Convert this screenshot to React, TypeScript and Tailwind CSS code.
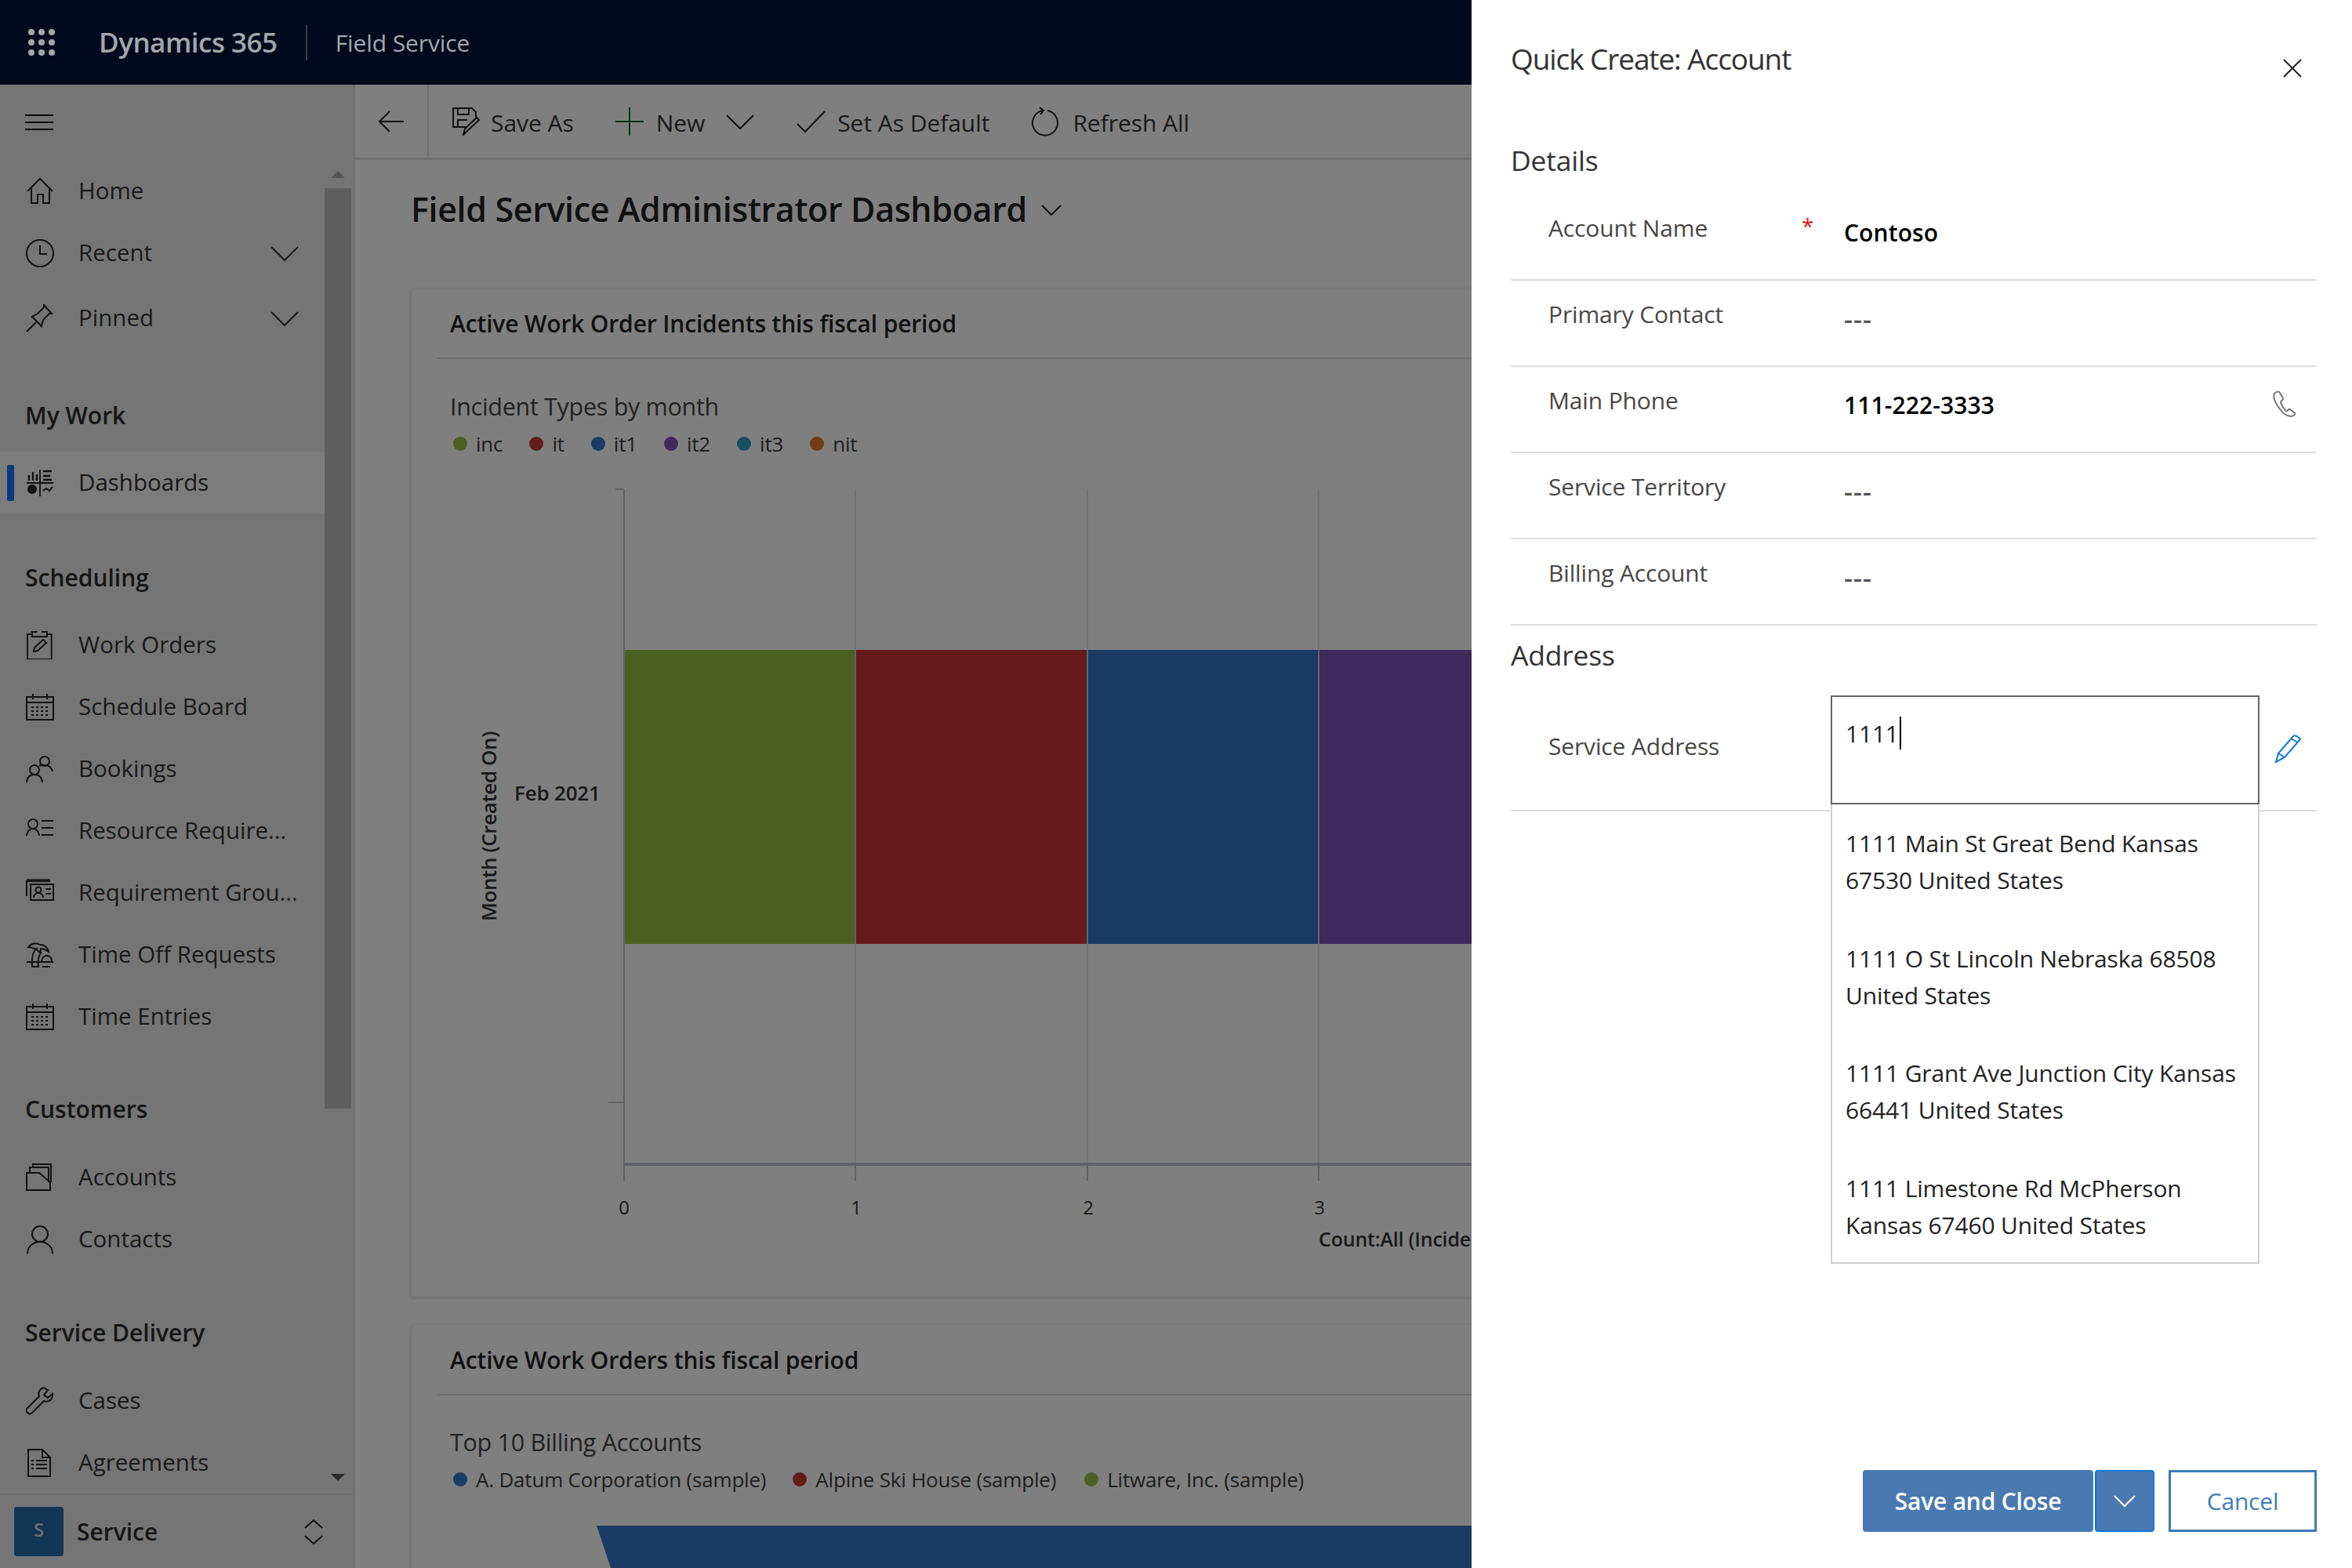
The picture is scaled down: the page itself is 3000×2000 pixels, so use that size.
import React from 'react';

const Svg = ({ children, w = 36, h = 36, className = '' }: { children: React.ReactNode; w?: number; h?: number; className?: string }) => (
  <svg width={w} height={h} viewBox={`0 0 ${w} ${h}`} fill="none" stroke="currentColor" strokeWidth={2} className={`shrink-0 ${className}`}>
    {children}
  </svg>
);

const icons: Record<string, React.ReactNode> = {
  home: <path d="M2 18 18 2l16 16M7 14v19h8V22h7v11h8V14" />,
  clock: (
    <>
      <circle cx="18" cy="18" r="17" />
      <path d="M18 8v11h9" />
    </>
  ),
  pin: <path d="M1 35 13 23M8 16l12 12 2-8 8-8 3 0L23 1l0 3-8 8-7 4ZM8 16l-1 1M20 28l-1 1" />,
  dash: (
    <>
      <path d="M18 1v34M1 18h34" strokeWidth={1.8} />
      <path d="M4 15V8M9 15V4M14 15V7M22 3h11M22 9h9M22 14h11" strokeWidth={2.4} />
      <circle cx="8" cy="26" r="5" fill="currentColor" />
      <path d="M22 28l4-3 4 3 4-5" />
    </>
  ),
  clipboard: (
    <>
      <path d="M7 6H1v32h32V6h-6M7 3h6a4 4 0 0 1 8 0h6v6H7Z" transform="translate(1 -2) scale(0.96 1)" />
      <path d="M10 26l1-5 11-10 4 4-11 10Z" />
    </>
  ),
  calendar: (
    <>
      <rect x="1" y="5" width="34" height="29" />
      <path d="M1 12h34M9 1v7M27 1v7" />
      <path d="M7 18h22M7 23h22M7 28h22" strokeDasharray="3 3" strokeWidth={2.2} />
    </>
  ),
  bookings: (
    <>
      <circle cx="24" cy="8" r="6" />
      <circle cx="11" cy="19" r="6" />
      <path d="M1 35c0-6 4-10 10-10s10 4 10 10M17 14c1-1 4-1 7-1 5 0 9 3 10 8" />
    </>
  ),
  resource: (
    <>
      <circle cx="9" cy="9" r="6" />
      <path d="M1 24c0-5 4-9 8-9s8 4 8 9M20 5h15M20 14h15M20 23h15" />
    </>
  ),
  group: (
    <>
      <path d="M1 22V3h30" />
      <path d="M1 1h30" strokeWidth={1.5} />
      <rect x="6" y="7" width="29" height="20" />
      <circle cx="16" cy="14" r="3.5" />
      <path d="M10 24c0-4 3-6 6-6s6 2 6 6M25 13h7M25 19h7" />
    </>
  ),
  palm: (
    <>
      <path d="M3 8c4-5 10-6 15-3 5 0 10 3 11 9-4-3-7-4-11-4 1 0 1 3 0 5-3-3-6-6-15-7Z" />
      <path d="M15 9c-5 3-8 10-7 24h8c-1-6 0-14 4-19" />
      <path d="M1 27h34M20 27c0-5 3-8 7-8s6 3 6 8M21 33h10" />
    </>
  ),
  accounts: <path d="M1 12v22h30V24L17 12Zm4 0V5h24v19M9 6V1h23v23" />,
  contact: (
    <>
      <circle cx="18" cy="11" r="10" />
      <path d="M2 36c0-9 7-15 16-15s16 6 16 15" />
    </>
  ),
  wrench: <path d="M23 1c-5 1-8 6-6 11L2 27c-2 2-2 4 0 6s4 2 6 0l15-15c5 2 10-1 11-6l0-3-6 5-5-4 5-6Z" />,
  doc: (
    <>
      <path d="M3 1h18l10 10v24H3ZM21 1v10h10" />
      <path d="M7 15h3M13 15h14M7 20h3M13 20h14M7 25h3M13 25h14" />
    </>
  ),
};

const NavItem = ({ icon, label, chevron, active }: { icon: string; label: string; chevron?: boolean; active?: boolean }) => (
  <div className={`flex h-[79px] items-center text-[29.5px] text-[#333] ${active ? 'bg-[#f8f8f8] pl-[9px]' : 'pl-[33px]'}`}>
    {active && <div className="mr-[15px] h-[46px] w-[9px] rounded-[2px] bg-[#1475ff]" />}
    <span className="w-[67px] text-[#222]">
      <Svg>{icons[icon]}</Svg>
    </span>
    <span className="flex-1 whitespace-nowrap">{label}</span>
    {chevron && (
      <span className="mr-[33px]">
        <Svg><path d="M1 10l17 17 17-17" /></Svg>
      </span>
    )}
  </div>
);

const Heading = ({ children, mt }: { children: string; mt: string }) => (
  <div className={`flex h-[56px] items-center pl-[32px] text-[30px] font-semibold text-[#2c2c2c] ${mt}`}>{children}</div>
);

const Sidebar = () => (
  <aside className="flex h-[1892px] w-[453px] shrink-0 flex-col border-r-2 border-[#dcdcdc] bg-[#ebebeb]">
    <div className="flex h-[96px] shrink-0 items-center pl-[32px] text-[#111]">
      <Svg w={36} h={22}><path d="M0 2h36M0 11h36M0 20h36" /></Svg>
    </div>
    <div className="flex min-h-0 flex-1">
      <nav className="w-[414px] overflow-hidden">
        <NavItem icon="home" label="Home" />
        <NavItem icon="clock" label="Recent" chevron />
        <div className="mt-[4px]">
          <NavItem icon="pin" label="Pinned" chevron />
        </div>
        <Heading mt="mt-[56px]">My Work</Heading>
        <div className="mt-[19px]">
          <NavItem icon="dash" label="Dashboards" active />
        </div>
        <Heading mt="mt-[53px]">Scheduling</Heading>
        <div className="mt-[19px]">
          <NavItem icon="clipboard" label="Work Orders" />
          <NavItem icon="calendar" label="Schedule Board" />
          <NavItem icon="bookings" label="Bookings" />
          <NavItem icon="resource" label="Resource Require..." />
          <NavItem icon="group" label="Requirement Grou..." />
          <NavItem icon="palm" label="Time Off Requests" />
          <NavItem icon="calendar" label="Time Entries" />
        </div>
        <Heading mt="mt-[50px]">Customers</Heading>
        <div className="mt-[20px]">
          <NavItem icon="accounts" label="Accounts" />
          <NavItem icon="contact" label="Contacts" />
        </div>
        <Heading mt="mt-[51px]">Service Delivery</Heading>
        <div className="mt-[20px]">
          <NavItem icon="wrench" label="Cases" />
          <NavItem icon="doc" label="Agreements" />
        </div>
      </nav>
      {/* scrollbar */}
      <div className="flex w-[34px] flex-col items-center">
        <div className="mb-[13px] mt-[14px] h-0 w-0 border-x-[9px] border-b-[9px] border-x-transparent border-b-[#a8a8a8]" />
        <div className="h-[1174px] w-full bg-[#bebebe]" />
        <div className="mt-auto mb-[16px] h-0 w-0 border-x-[9px] border-t-[9px] border-x-transparent border-t-[#555]" />
      </div>
    </div>
    <div className="flex h-[95px] shrink-0 items-center border-t-2 border-[#dcdcdc] pl-[18px]">
      <div className="flex h-[63px] w-[63px] items-center justify-center rounded-[4px] bg-[#276ca8] pb-[6px] text-[24px] font-semibold text-[#ddd]">S</div>
      <span className="ml-[17px] flex-1 text-[30px] font-semibold text-[#2c2c2c]">Service</span>
      <span className="mr-[39px] text-[#222]">
        <Svg w={24} h={34}><path d="M1 12 12 2l11 10M1 22l11 10 11-10" /></Svg>
      </span>
    </div>
  </aside>
);

const ToolButton = ({ icon, label, ml, gap }: { icon: React.ReactNode; label: string; ml: string; gap: string }) => (
  <div className={`flex items-center ${ml}`}>
    {icon}
    <span className={`mt-[3px] whitespace-nowrap text-[30px] tracking-[-0.05px] text-[#333] ${gap}`}>{label}</span>
  </div>
);

const Toolbar = () => (
  <div className="flex h-[96px] shrink-0 items-center border-b-[3px] border-[#dcdcdc]">
    <div className="flex h-full w-[94px] items-center justify-center border-r-2 border-[#dcdcdc] text-[#222]">
      <Svg w={32} h={28}><path d="M32 14H1M14 1 1 14l13 13" /></Svg>
    </div>
    <ToolButton
      ml="ml-[29px]"
      gap="ml-[14px]"
      label="Save As"
      icon={
        <Svg w={36} h={36} className="text-[#222]">
          <path d="M18 25H2V1h24l5 5v6M8 1v8h14V1M8 25v-9h12" />
          <path d="M15 35l2-8 15-14 3 3-15 14Z" />
        </Svg>
      }
    />
    <ToolButton
      ml="ml-[53px]"
      gap="ml-[16px]"
      label="New"
      icon={
        <Svg w={36} h={36} className="text-[#0f6a2c]">
          <path d="M18 0v36M0 18h36" />
        </Svg>
      }
    />
    <span className="ml-[27px] text-[#222]">
      <Svg w={36} h={20}><path d="M1 2l17 17L35 2" /></Svg>
    </span>
    <ToolButton
      ml="ml-[54px]"
      gap="ml-[15px]"
      label="Set As Default"
      icon={
        <Svg w={37} h={30} className="text-[#222]">
          <path d="M1 18l10 10L36 2" />
        </Svg>
      }
    />
    <ToolButton
      ml="ml-[53px]"
      gap="ml-[16px]"
      label="Refresh All"
      icon={
        <Svg w={37} h={38} className="text-[#222]">
          <path d="M21 5a16 16 0 1 1-6 0M11 1l5 4-4 5" />
        </Svg>
      }
    />
  </div>
);

const LegendItem = ({ color, label, ml }: { color: string; label: string; ml: string }) => (
  <div className={`flex items-center ${ml}`}>
    <span className={`h-[18px] w-[18px] rounded-full ${color}`} />
    <span className="ml-[11px] whitespace-nowrap text-[26px] tracking-[-0.2px] text-[#3c3c3c]">{label}</span>
  </div>
);

const Chart = () => (
  <svg viewBox="525 595 1360 1000" width={1360} height={1000} className="mt-[12px] block">
    <g stroke="#e8e8e8" strokeWidth={2}>
      <path d="M1091 623v861M1387 623v861M1682 623v861" />
    </g>
    <rect x="796" y="828" width="295" height="375" fill="#9dbe44" />
    <rect x="1091" y="828" width="296" height="375" fill="#ca3636" />
    <rect x="1387" y="828" width="295" height="375" fill="#3476c8" />
    <rect x="1682" y="828" width="300" height="375" fill="#7c54b8" />
    <g stroke="#c9c9c9" strokeWidth={2}>
      <path d="M1091 828v375M1387 828v375M1682 828v375" />
    </g>
    <g stroke="#c0c4cc" strokeWidth={2} fill="none">
      <path d="M796 623v882M776 1405h20M785 623h11" />
      <path d="M796 1484h1100" strokeWidth={4} />
      <path d="M1091 1484v21M1387 1484v21M1682 1484v21" />
    </g>
    <g fontFamily="'Open Sans', sans-serif" fontSize="24" fill="#333" textAnchor="middle" letterSpacing="-0.2">
      <text x="796" y="1548">0</text>
      <text x="1092" y="1548">1</text>
      <text x="1388" y="1548">2</text>
      <text x="1683" y="1548">3</text>
    </g>
    <text x="656" y="1020" fontFamily="'Open Sans', sans-serif" fontSize="26" fontWeight="600" letterSpacing="-0.2" fill="#333">Feb 2021</text>
    <text x="0" y="0" transform="translate(633 1053) rotate(-90)" textAnchor="middle" fontFamily="'Open Sans', sans-serif" fontSize="26" fontWeight="600" letterSpacing="-0.4" fill="#333">Month (Created On)</text>
    <text x="1682" y="1589" fontFamily="'Open Sans', sans-serif" fontSize="25" fontWeight="600" letterSpacing="-0.2" fill="#333">Count:All (Incident Type)</text>
  </svg>
);

const Card = ({ title, className, children }: { title: string; className: string; children: React.ReactNode }) => (
  <section className={`w-[2380px] overflow-hidden rounded-t-[6px] border border-[#f2f2f2] bg-white shadow-[0_2px_4px_rgba(0,0,0,0.15)] ${className}`}>
    <div className="mx-[32px] flex h-[90px] items-center border-b-2 border-[#e0e0e0] pl-[17px] text-[30px] font-semibold tracking-[-0.15px] text-[#222]">{title}</div>
    <div className="pl-[49px]">{children}</div>
  </section>
);

const Main = () => (
  <main className="flex min-w-0 flex-1 flex-col bg-[#fefefe]">
    <Toolbar />
    <div className="flex flex-1 flex-col overflow-hidden pl-[71px]">
      <div className="flex h-[163px] shrink-0 items-start pt-[32px]">
        <h1 className="whitespace-nowrap text-[43px] font-semibold leading-[62px] tracking-[-0.35px] text-[#222]">Field Service Administrator Dashboard</h1>
        <span className="ml-[18px] mt-[24px] text-[#222]">
          <Svg w={26} h={16}><path d="M1 2l12 12L25 2" /></Svg>
        </span>
      </div>
      <Card title="Active Work Order Incidents this fiscal period" className="h-[1287px] shrink-0">
        <div className="mt-[42px] text-[30.5px] leading-[36px] tracking-[-0.3px] text-[#444]">Incident Types by month</div>
        <div className="mt-[12px] flex h-[36px] items-center pl-[4px]">
          <LegendItem color="bg-[#9dbe44]" label="inc" ml="" />
          <LegendItem color="bg-[#ca3636]" label="it" ml="ml-[34px]" />
          <LegendItem color="bg-[#3476c8]" label="it1" ml="ml-[34px]" />
          <LegendItem color="bg-[#7c54b8]" label="it2" ml="ml-[34px]" />
          <LegendItem color="bg-[#2f9fb8]" label="it3" ml="ml-[34px]" />
          <LegendItem color="bg-[#e0792a]" label="nit" ml="ml-[34px]" />
        </div>
        <div className="-ml-[49px]">
          <Chart />
        </div>
      </Card>
      <Card title="Active Work Orders this fiscal period" className="mt-[35px] shrink-0">
        <div className="mt-[41px] text-[30.5px] leading-[36px] tracking-[-0.3px] text-[#444]">Top 10 Billing Accounts</div>
        <div className="mt-[12px] flex h-[36px] items-center pl-[4px]">
          <LegendItem color="bg-[#3476c8]" label="A. Datum Corporation (sample)" ml="" />
          <LegendItem color="bg-[#ca3636]" label="Alpine Ski House (sample)" ml="ml-[34px]" />
          <LegendItem color="bg-[#9dbe44]" label="Litware, Inc. (sample)" ml="ml-[36px]" />
        </div>
        <svg width="1400" height="60" viewBox="0 0 1400 60" className="ml-[187px] mt-[41px] block">
          <path d="M0 0H1400V60H20Z" fill="#3476c8" />
        </svg>
      </Card>
    </div>
  </main>
);

const Row = ({ label, value, muted, star, icon }: { label: string; value: string; muted?: boolean; star?: boolean; icon?: React.ReactNode }) => (
  <div className="flex h-[110px] items-start border-b-2 border-[#dcdcdc] pl-[48px]">
    <span className="mt-[23px] w-[330px] whitespace-nowrap text-[30px] leading-[40px] tracking-[-0.15px] text-[#484644]">{label}</span>
    <span className="relative -ml-[1px] w-[48px]">
      {star && <span className="absolute left-[-6px] top-[19px] text-[28px] text-[#e81123]">*</span>}
    </span>
    <span className={`mt-[29px] flex-1 font-semibold leading-[40px] ${muted ? 'text-[34px] tracking-[1px] text-[#555]' : 'text-[30px] tracking-[0.1px] text-black'}`}>{value}</span>
    {icon}
  </div>
);

const AddressOption = ({ lines }: { lines: string[] }) => (
  <div className="h-[146.5px] pl-[17px] text-[30px] leading-[47px] tracking-[-0.15px] text-[#222]">
    {lines.map((line) => (
      <div key={line} className="whitespace-nowrap">{line}</div>
    ))}
  </div>
);

const QuickCreate = () => (
  <aside className="absolute right-0 top-0 z-20 flex h-[2000px] w-[1123px] flex-col bg-white pl-[50px] pr-[45px]">
    <div className="flex h-[150px] shrink-0 items-start justify-between">
      <h2 className="mt-[50px] text-[37px] leading-[50px] tracking-[-1.1px] text-[#333]">Quick Create: Account</h2>
      <span className="mr-[19px] mt-[75px] text-[#222]">
        <Svg w={24} h={24}><path d="M1 1l22 22M23 1 1 23" /></Svg>
      </span>
    </div>
    <div className="mt-[32px] h-[44px] text-[35.5px] leading-[44px] tracking-[-0.2px] text-[#333]">Details</div>
    <div className="mt-[23px] flex-none">
      <div className="-mt-[1px]">
        <Row label="Account Name" value="Contoso" star />
      </div>
      <Row label="Primary Contact" value="---" muted />
      <Row
        label="Main Phone"
        value="111-222-3333"
        icon={
          <span className="mr-[25px] mt-[30px] text-[#777]">
            <Svg w={32} h={34}>
              <path d="M3 4c3-3 6-3 7-1l4 7c1 2-3 3-3 5 1 4 4 8 7 11 2 1 3-3 5-2l6 5c1 2-2 4-5 4-6 0-12-6-16-12C4 15 1 8 3 4Z" />
            </Svg>
          </span>
        }
      />
      <Row label="Service Territory" value="---" muted />
      <Row label="Billing Account" value="---" muted />
    </div>
    <div className="mt-[15px] h-[44px] text-[35.5px] leading-[44px] tracking-[-0.2px] text-[#333]">Address</div>
    {/* address row, suggestion list hangs below the input */}
    <div className="relative mt-[30px] flex h-[148px] border-b-2 border-[#dcdcdc] pl-[48px]">
      <span className="mt-[45px] w-[360px] whitespace-nowrap text-[30px] leading-[40px] tracking-[-0.15px] text-[#484644]">Service Address</span>
      <div className="h-[139px] w-[547px] border-2 border-[#666] bg-white pl-[17px] pt-[24px]">
        <div className="flex h-[44px] items-center text-[30px] tracking-[-0.2px] text-[#222]">
          1111
          <span className="ml-[1px] h-[42px] w-[2px] bg-black" />
        </div>
      </div>
      <span className="ml-[19px] mt-[49px] text-[#0f7bd8]">
        <Svg w={36} h={38}>
          <path d="M2 36l3-11L24 3c2-2 7 1 9 4L13 30Zm3-11 8 5M21 6l9 5" />
        </Svg>
      </span>
      <div className="absolute left-[408px] top-[139px] z-10 h-[586px] w-[547px] border-x-2 border-b-2 border-[#cfcfcf] bg-white pt-[26px]">
        <AddressOption lines={['1111 Main St Great Bend Kansas', '67530 United States']} />
        <AddressOption lines={['1111 O St Lincoln Nebraska 68508', 'United States']} />
        <AddressOption lines={['1111 Grant Ave Junction City Kansas', '66441 United States']} />
        <AddressOption lines={['1111 Limestone Rd McPherson', 'Kansas 67460 United States']} />
      </div>
    </div>
    <div className="mt-auto mb-[46px] flex h-[79px] justify-end">
      <button className="flex w-[294px] items-center justify-center rounded-[4px] bg-[#4a79b2] text-[30px] font-semibold tracking-[-0.2px] text-white">Save and Close</button>
      <button className="ml-[2px] flex w-[76px] items-center justify-center rounded-[4px] border-2 border-[#0f78d4] bg-[#4a79b2] text-white">
        <Svg w={28} h={16}><path d="M1 1l13 13L27 1" /></Svg>
      </button>
      <button className="ml-[18px] flex w-[189px] items-center justify-center border-[3px] border-[#3c7cba] text-[30px] tracking-[-0.2px] text-[#3c7cba]">Cancel</button>
    </div>
  </aside>
);

export default function App() {
  return (
    <div className="relative h-[2000px] w-[3000px] overflow-hidden bg-white font-['Open_Sans',sans-serif]">
      <header className="relative z-10 flex h-[108px] items-center bg-[#000a1c]">
        <div className="ml-[36px] grid w-[34px] grid-cols-3 gap-[5px]">
          {Array.from({ length: 9 }).map((_, i) => (
            <span key={i} className="h-[8px] w-[8px] rounded-full bg-[#a3a7ad]" />
          ))}
        </div>
        <span className="ml-[56px] text-[35px] font-semibold tracking-[-0.5px] text-[#a3a7ad]">Dynamics 365</span>
        <span className="ml-[36px] h-[45px] w-[2px] bg-[#333a47]" />
        <span className="ml-[36px] text-[30px] tracking-[-0.1px] text-[#a3a7ad]">Field Service</span>
      </header>
      <div className="flex h-[1892px]">
        <Sidebar />
        <Main />
      </div>
      {/* modal scrim */}
      <div className="absolute inset-0 bg-black/50" />
      <QuickCreate />
    </div>
  );
}
